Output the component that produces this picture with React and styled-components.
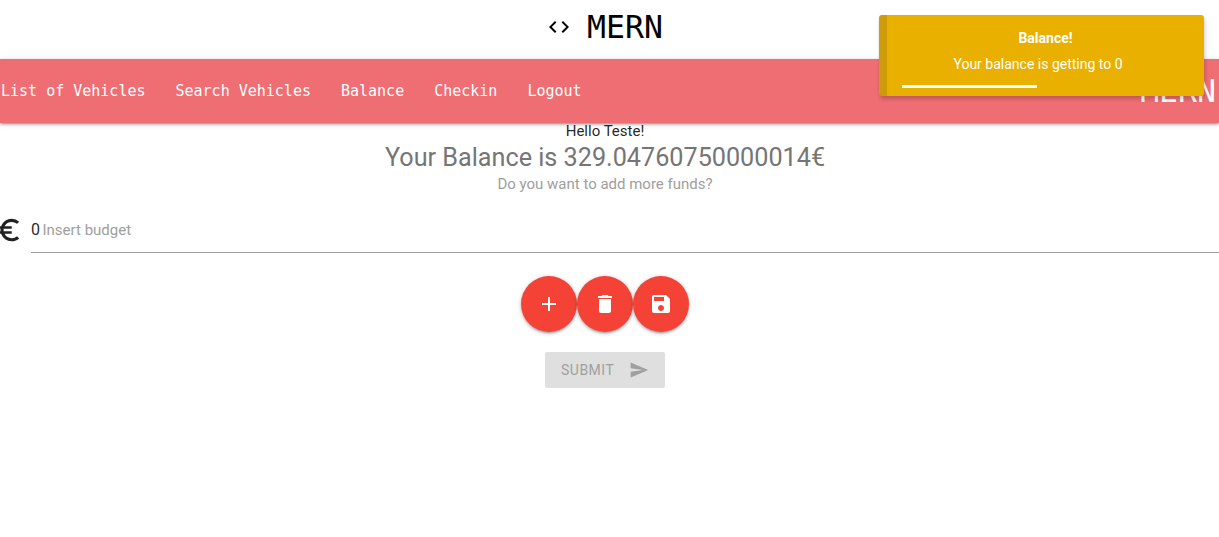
import React from "react";
import styled, { createGlobalStyle } from "styled-components";
import { MdCode, MdAdd, MdDelete, MdSave, MdSend, MdEuroSymbol } from "react-icons/md";

const GlobalStyle = createGlobalStyle`
  html { font-size: 15px; }
  body {
    margin: 0;
    overflow: hidden;
    background: #fff;
    color: rgba(0, 0, 0, 0.87);
    font-family: Roboto, "Liberation Sans", sans-serif;
    line-height: 1.5;
  }
  *, *::before, *::after { box-sizing: border-box; }
`;

const Page = styled.div`
  height: 537px;
  overflow: hidden;
`;

const Header = styled.header`
  display: flex;
  justify-content: center;
  align-items: center;
  width: 1210px;
  height: 59px;
  padding: 0 0 5px;
  color: #000;
`;

const HeaderTitle = styled.span`
  margin-left: 16px;
  font: 31.5px/38px "DejaVu Sans Mono", monospace;
`;

const Nav = styled.nav`
  display: flex;
  justify-content: space-between;
  align-items: center;
  height: 64px;
  padding: 0 3px 0 1px;
  background: #ee6e73;
  color: #fff;
  font-family: "DejaVu Sans Mono", monospace;
  box-shadow: 0 2px 2px 0 rgba(0, 0, 0, 0.14), 0 3px 1px -2px rgba(0, 0, 0, 0.12),
    0 1px 5px 0 rgba(0, 0, 0, 0.2);
`;

const NavList = styled.ul`
  display: flex;
  gap: 30px;
  margin: 0;
  padding: 0;
  list-style: none;
  font-size: 15px;
  line-height: 64px;
`;

const Brand = styled.span`
  font-size: 31.5px;
  line-height: 64px;
`;

const Content = styled.main`
  display: flex;
  flex-direction: column;
  align-items: center;
  width: 1210px;
`;

const Greeting = styled.div`
  height: 17px;
  font-size: 15px;
  line-height: 16px;
`;

const Balance = styled.div`
  height: 33px;
  color: #757575;
  font-size: 25.2px;
  line-height: 36px;
`;

const Question = styled.div`
  color: #9e9e9e;
  font-size: 15px;
  line-height: 22px;
`;

const Field = styled.label`
  display: flex;
  align-self: flex-start;
  width: 1226px;
  height: 45px;
  margin: 13px 0 23px -7px;
`;

const EuroIcon = styled(MdEuroSymbol)`
  flex: none;
  width: 30px;
  height: 30px;
  margin: 7px 8px 0 0;
`;

const FieldLine = styled.span`
  display: flex;
  flex: 1;
  gap: 2.5px;
  border-bottom: 1px solid #9e9e9e;
  line-height: 44px;
`;

const Amount = styled.span`
  font-size: 16px;
`;

const Hint = styled.span`
  color: #9e9e9e;
  font-size: 15px;
`;

const Actions = styled.div`
  display: flex;
  margin-bottom: 20px;
`;

const RoundButton = styled.button`
  display: flex;
  align-items: center;
  justify-content: center;
  width: 56px;
  height: 56px;
  padding: 0;
  border: 0;
  border-radius: 50%;
  background: #f44336;
  color: #fff;
  font-size: 24px;
  box-shadow: 0 2px 2px 0 rgba(0, 0, 0, 0.14), 0 3px 1px -2px rgba(0, 0, 0, 0.12),
    0 1px 5px 0 rgba(0, 0, 0, 0.2);
`;

const SubmitButton = styled.button`
  display: flex;
  align-items: center;
  justify-content: space-between;
  width: 120px;
  height: 36px;
  padding: 0 16px;
  border: 0;
  border-radius: 2px;
  background: #dfdfdf;
  color: #9f9f9f;
  font: 14px/36px Roboto, sans-serif;
  letter-spacing: 0.5px;
`;

const Toast = styled.aside`
  position: absolute;
  top: 15px;
  left: 879px;
  width: 325px;
  height: 81px;
  padding: 12px 15px 0;
  border-left: 8px solid #ce9c09;
  border-radius: 3px;
  background: #eab000;
  color: #fff;
  font-size: 14px;
  text-align: center;
  box-shadow: 1px 3px 4px rgba(0, 0, 0, 0.2);
`;

const ToastTitle = styled.div`
  height: 26px;
  font-weight: 700;
  line-height: 22px;
`;

const ToastMessage = styled.div`
  height: 32px;
  padding-right: 15px;
  line-height: 22px;
`;

const ToastProgress = styled.div`
  width: 135px;
  height: 3px;
  background: #fff;
`;

const links = ["List of Vehicles", "Search Vehicles", "Balance", "Checkin", "Logout"];

export default function App() {
  return (
    <Page>
      <GlobalStyle />
      <Header>
        <MdCode size={24} />
        <HeaderTitle>MERN</HeaderTitle>
      </Header>
      <Nav>
        <NavList>
          {links.map((text) => (
            <li key={text}>{text}</li>
          ))}
        </NavList>
        <Brand>MERN</Brand>
      </Nav>
      <Content>
        <Greeting>Hello Teste!</Greeting>
        <Balance>Your Balance is 329.04760750000014€</Balance>
        <Question>Do you want to add more funds?</Question>
        <Field>
          <EuroIcon />
          <FieldLine>
            <Amount>0</Amount>
            <Hint>Insert budget</Hint>
          </FieldLine>
        </Field>
        <Actions>
          <RoundButton aria-label="Add"><MdAdd /></RoundButton>
          <RoundButton aria-label="Delete"><MdDelete /></RoundButton>
          <RoundButton aria-label="Save"><MdSave /></RoundButton>
        </Actions>
        <SubmitButton>
          SUBMIT
          <MdSend size={20} />
        </SubmitButton>
      </Content>
      <Toast>
        <ToastTitle>Balance!</ToastTitle>
        <ToastMessage>Your balance is getting to 0</ToastMessage>
        <ToastProgress />
      </Toast>
    </Page>
  );
}
